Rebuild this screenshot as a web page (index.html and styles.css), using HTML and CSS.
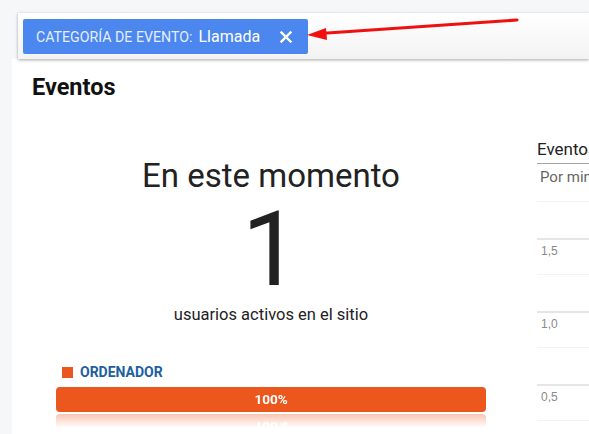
FILE: index.html
```html
<!DOCTYPE html>
<html lang="es">
<head>
<meta charset="utf-8">
<title>Eventos</title>
<link rel="stylesheet" href="styles.css">
</head>
<body>
<div class="topbar">
  <div class="chip">
    <span class="chip-label">CATEGORÍA DE EVENTO:</span>
    <span class="chip-value">Llamada</span>
    <svg class="chip-x" width="12" height="12" viewBox="0 0 12 12"><path d="M1.5 1.5 L10.5 10.5 M10.5 1.5 L1.5 10.5" stroke="#fff" stroke-width="2.4" stroke-linecap="square"/></svg>
  </div>
</div>
<svg class="arrow" width="589" height="60" viewBox="0 0 589 60">
  <line x1="517" y1="20" x2="320" y2="33.5" stroke="#f01010" stroke-width="3.2" stroke-linecap="round"/>
  <polygon points="307,35 326,28 327,40" fill="#f01010"/>
</svg>
<main class="main">
  <h1 class="title">Eventos</h1>
  <div class="cols">
    <section class="left">
      <div class="now">En este momento</div>
      <div class="count">1</div>
      <div class="sub">usuarios activos en el sitio</div>
      <div class="legend"><span class="sq"></span><span class="legend-text">ORDENADOR</span></div>
      <div class="bar">100%</div>
    </section>
    <section class="right">
      <div class="rtitle">Eventos</div>
      <div class="rsub">Por minuto</div>
      <div class="chart">
        <div class="gl minor"></div>
        <div class="gl major"><span class="lbl">1,5</span></div>
        <div class="gl minor"></div>
        <div class="gl major"><span class="lbl">1,0</span></div>
        <div class="gl minor"></div>
        <div class="gl major"><span class="lbl">0,5</span></div>
        <div class="gl minor"></div>
      </div>
    </section>
  </div>
</main>
</body>
</html>
```
FILE: styles.css
```css
html, body {
  margin: 0;
  padding: 0;
}
body {
  width: 589px;
  height: 434px;
  overflow: hidden;
  background: #f6f7f9;
  font-family: Roboto, "Liberation Sans", Arial, sans-serif;
  color: #222;
  position: relative;
}
.topbar {
  margin: 13px 0 0 18px;
  height: 46px;
  background: linear-gradient(#ffffff, #f3f3f3);
  box-shadow: 0 1px 3px rgba(0,0,0,0.35);
  position: relative;
  z-index: 2;
  padding: 6px 0 0 5px;
  box-sizing: border-box;
}
.chip {
  width: 285px;
  height: 35px;
  background: #4b87ee;
  border-radius: 2px;
  display: flex;
  align-items: center;
  padding-left: 13px;
  box-sizing: border-box;
  color: #fff;
}
.chip-label {
  font-size: 14.2px;
  color: #e6eefc;
}
.chip-value {
  font-size: 16px;
  margin-left: 6px;
}
.chip-x {
  margin-left: 20px;
}
.arrow {
  position: absolute;
  left: 0;
  top: 0;
  z-index: 3;
}
.main {
  margin-left: 12px;
  background: #fff;
  height: 375px;
  padding-left: 20px;
  overflow: hidden;
}
.title {
  margin: 0;
  padding-top: 14px;
  font-size: 23.5px;
  line-height: 28px;
  font-weight: 700;
  color: #111;
}
.cols {
  display: flex;
}
.left {
  flex: none;
  width: 478px;
  padding: 0 24px;
  box-sizing: border-box;
  display: flex;
  flex-direction: column;
  align-items: center;
}
.now {
  margin-top: 54px;
  font-size: 33px;
  line-height: 41px;
  color: #222;
}
.count {
  margin-top: 2px;
  font-size: 104px;
  line-height: 104px;
  color: #222;
}
.sub {
  margin-top: 2px;
  font-size: 16.5px;
  line-height: 21px;
  color: #222;
}
.legend {
  align-self: stretch;
  margin-top: 39px;
  padding-left: 6px;
  display: flex;
  align-items: center;
  height: 16px;
}
.sq {
  width: 11px;
  height: 11px;
  background: #ea561e;
}
.legend-text {
  margin-left: 7px;
  font-size: 14px;
  font-weight: 700;
  color: #1c5f9f;
}
.bar {
  align-self: stretch;
  margin-top: 7px;
  height: 25px;
  line-height: 25px;
  background: #ec571d;
  border-radius: 4px;
  color: #fff;
  font-size: 13.5px;
  font-weight: 700;
  text-align: center;
  -webkit-box-reflect: below 2px linear-gradient(transparent 45%, rgba(255,255,255,0.35));
}
.right {
  margin-left: 27px;
  width: 200px;
  flex: none;
}
.rtitle {
  margin-top: 37px;
  font-size: 17px;
  line-height: 22px;
  padding-bottom: 3px;
  border-bottom: 1px solid #a9a4a2;
  color: #222;
  white-space: nowrap;
}
.rsub {
  margin-top: 3px;
  font-size: 15px;
  line-height: 20px;
  color: #666;
  padding-left: 3px;
  white-space: nowrap;
}
.chart {
  margin-top: 14px;
}
.gl {
  height: 36.5px;
  box-sizing: border-box;
  border-top: 1px solid #f3f3f3;
}
.gl.major {
  border-top: 2px solid #e6e6e6;
  padding: 0 0 0 4px;
}
.lbl {
  font-size: 12px;
  line-height: 14px;
  color: #8a8a8a;
  font-family: "Liberation Sans", Arial, sans-serif;
}
```
